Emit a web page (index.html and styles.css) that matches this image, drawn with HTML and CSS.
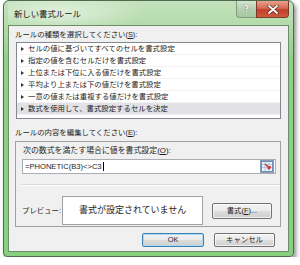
FILE: index.html
```html
<!DOCTYPE html>
<html lang="ja">
<head>
<meta charset="utf-8">
<link rel="stylesheet" href="styles.css">
</head>
<body>
<div class="window">
  <div class="titlebar">
    <span class="title">新しい書式ルール</span>
    <div class="caption">
      <div class="cap-help">?</div>
      <div class="cap-close">
        <svg width="12" height="9" viewBox="0 0 12 9"><path d="M2 1 L10 8 M10 1 L2 8" stroke="#5a2a20" stroke-width="3.2" stroke-linecap="round"/><path d="M2 1 L10 8 M10 1 L2 8" stroke="#fff" stroke-width="1.8" stroke-linecap="round"/></svg>
      </div>
    </div>
  </div>
  <div class="client">
    <div class="label l1">ルールの種類を選択してください(<u>S</u>):</div>
    <div class="list">
      <div class="row">セルの値に基づいてすべてのセルを書式設定</div>
      <div class="row">指定の値を含むセルだけを書式設定</div>
      <div class="row">上位または下位に入る値だけを書式設定</div>
      <div class="row">平均より上または下の値だけを書式設定</div>
      <div class="row">一意の値または重複する値だけを書式設定</div>
      <div class="row sel">数式を使用して、書式設定するセルを決定</div>
    </div>
    <div class="label l2">ルールの内容を編集してください(<u>E</u>):</div>
    <div class="group">
      <div class="label l3">次の数式を満たす場合に値を書式設定(<u>O</u>):</div>
      <div class="input">
        <span class="formula">=PHONETIC(B3)&lt;&gt;C3</span><span class="caret"></span>
        <div class="rangebtn">
          <svg width="12" height="11" viewBox="0 0 12 11"><rect x="0.5" y="0.5" width="11" height="10" fill="#e9f1fb" stroke="#6d8fb8"/><path d="M1 3.5 H11 M1 6.5 H11 M4 1 V10 M8 1 V10" stroke="#a8bfdc" stroke-width="0.8"/><path d="M4 3 L9 7.5 M9 7.5 L9 5 M9 7.5 L6.5 7.5" stroke="#d0302a" stroke-width="1.6" fill="none"/></svg>
        </div>
      </div>
      <div class="sep"></div>
      <div class="preview-row">
        <div class="label plabel">プレビュー:</div>
        <div class="preview">書式が設定されていません</div>
        <div class="btn fmt">書式(<u>F</u>)...</div>
      </div>
    </div>
    <div class="buttons">
      <div class="btn ok">OK</div>
      <div class="btn cancel">キャンセル</div>
    </div>
  </div>
</div>
</body>
</html>
```
FILE: styles.css
```css
html, body {
  margin: 0;
  padding: 0;
  background: #ffffff;
}
body {
  font-family: "Liberation Sans", "Noto Sans CJK JP", sans-serif;
  color: #1e1e1e;
}
.window {
  box-sizing: border-box;
  width: 291px;
  height: 257px;
  margin-left: 3px;
  border: 1px solid #4f6a4d;
  border-radius: 6px 6px 4px 4px;
  padding: 0 4px 4px 4px;
  display: flex;
  flex-direction: column;
  background: linear-gradient(180deg, #c4e2bd 0px, #b3dbab 24px, #8fd087 60px, #86d07e 100%);
  box-shadow: 2px 3px 4px rgba(0, 0, 0, 0.45);
}
.titlebar {
  height: 24px;
  display: flex;
  align-items: flex-start;
  background: radial-gradient(ellipse 90px 20px at 50px 12px, rgba(255,255,255,0.55), rgba(255,255,255,0) 100%);
}
.title {
  padding-left: 6px;
  font-family: "Noto Sans CJK JP", sans-serif;
  font-size: 8.4px;
  line-height: 24px;
  color: #111;
}
.caption {
  margin-left: auto;
  display: flex;
}
.cap-help {
  box-sizing: border-box;
  width: 20px;
  height: 17px;
  border: 1px solid #7e9a7b;
  border-top: none;
  border-right: none;
  border-radius: 0 0 0 4px;
  background: linear-gradient(180deg, #d2e6cf 0%, #b4cfb0 50%, #a7c6a3 100%);
  color: #f4f4f4;
  font-family: "DejaVu Sans", sans-serif;
  font-weight: bold;
  font-size: 9px;
  line-height: 16px;
  text-align: center;
  text-shadow: 0 0 1px #445;
}
.cap-close {
  box-sizing: border-box;
  width: 33px;
  height: 17px;
  border: 1px solid #7a3a2c;
  border-top: none;
  border-radius: 0 0 4px 0;
  background: linear-gradient(180deg, #e8a18f 0%, #d66a52 45%, #c2402a 55%, #cf5a3e 100%);
  display: flex;
  align-items: center;
  justify-content: center;
}
.client {
  flex: 1;
  border: 1px solid #6e8e6b;
  background: #f0f0f0;
  display: flex;
  flex-direction: column;
  padding: 4px 4px 0 6px;
}
.label {
  font-size: 7.4px;
  line-height: 10px;
  white-space: nowrap;
}
.list {
  box-sizing: border-box;
  height: 77px;
  margin: 2px 3px 0 1px;
  border: 1px solid #828790;
  background: #ffffff;
}
.row {
  height: 12px;
  box-sizing: border-box;
  border-bottom: 1px solid #f2f2f2;
  padding-left: 11px;
  font-size: 7.4px;
  line-height: 12px;
  white-space: nowrap;
  position: relative;
}
.row::before {
  content: "";
  position: absolute;
  left: 4px;
  top: 4px;
  border-left: 3px solid #333;
  border-top: 2px solid transparent;
  border-bottom: 2px solid transparent;
}
.row.sel {
  background: #e1e1e6;
}
.l2 {
  margin-top: 9px;
}
.group {
  box-sizing: border-box;
  height: 86px;
  margin: 3px 3px 0 0;
  border: 1px solid #a0a0a0;
  padding: 4px 8px 0 6px;
  display: flex;
  flex-direction: column;
}
.l3 {
  margin-left: 1px;
  font-size: 7.9px;
}
.input {
  box-sizing: border-box;
  height: 15px;
  width: 254px;
  margin-top: 3px;
  border: 1px solid #abadb3;
  background: #ffffff;
  display: flex;
  align-items: center;
  padding-left: 2px;
}
.formula {
  font-size: 7.6px;
  line-height: 13px;
}
.caret {
  width: 1px;
  height: 9px;
  background: #000;
  margin-left: 1px;
}
.rangebtn {
  margin-left: auto;
  margin-right: 1px;
  box-sizing: border-box;
  width: 14px;
  height: 13px;
  border: 1px solid #8a9bb4;
  background: #dfe8f3;
  display: flex;
  align-items: center;
  justify-content: center;
}
.sep {
  height: 1px;
  margin-top: 10px;
  margin-right: -7px;
  background: #d8d8d8;
  border-bottom: 1px solid #ffffff;
}
.preview-row {
  display: flex;
  align-items: center;
  margin-top: 10px;
}
.plabel {
  width: 41px;
}
.preview {
  box-sizing: border-box;
  width: 142px;
  height: 29px;
  border: 1px solid #a0a0a0;
  background: #ffffff;
  font-size: 9px;
  line-height: 27px;
  text-align: center;
  white-space: nowrap;
}
.btn {
  box-sizing: border-box;
  height: 15px;
  border: 1px solid #707070;
  border-radius: 2px;
  background: linear-gradient(180deg, #f2f2f2 0%, #ebebeb 49%, #dddddd 50%, #cfcfcf 100%);
  font-size: 7.4px;
  line-height: 13px;
  text-align: center;
  white-space: nowrap;
  box-shadow: inset 0 0 0 1px rgba(255,255,255,0.7);
}
.fmt {
  width: 61px;
  height: 16px;
  line-height: 14px;
  margin-left: 9px;
}
.buttons {
  display: flex;
  justify-content: flex-end;
  gap: 10px;
  margin-top: 6px;
  padding-right: 9px;
}
.ok {
  width: 62px;
  height: 14px;
  line-height: 12px;
  border-color: #3c7fb1;
  box-shadow: inset 0 0 0 1px #a8dcf5;
}
.cancel {
  width: 61px;
  height: 14px;
  line-height: 12px;
}
```
